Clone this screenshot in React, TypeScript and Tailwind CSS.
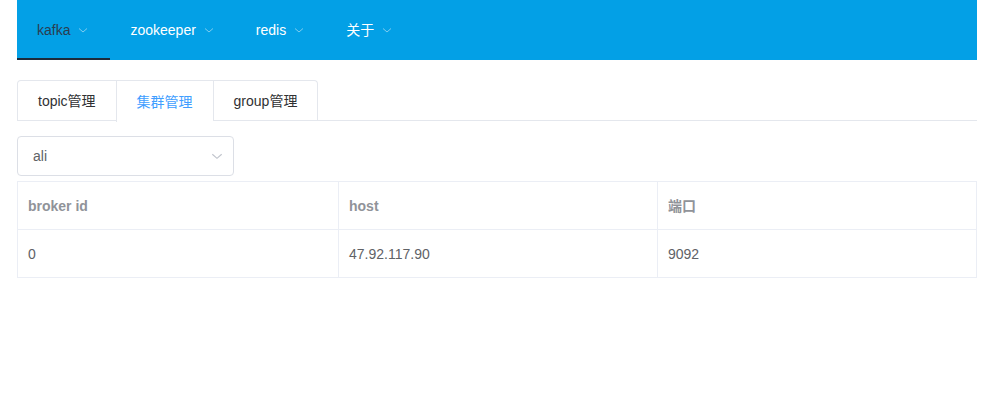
import React, { useState } from "react";

const menus = ["kafka", "zookeeper", "redis", "关于"];
const tabs = ["topic管理", "集群管理", "group管理"];
const rows = [{ id: "0", host: "47.92.117.90", port: "9092" }];

function Arrow({ className }: { className: string }) {
  return (
    <svg viewBox="0 0 12 12" className={className} fill="none">
      <path d="M2 4.5 L6 8 L10 4.5" stroke="currentColor" strokeWidth="1" />
    </svg>
  );
}

export default function App() {
  const [activeMenu, setActiveMenu] = useState(0);
  const [activeTab, setActiveTab] = useState(1);

  return (
    <div
      className="w-[989px] h-[416px] bg-white"
      style={{ fontFamily: '"Liberation Sans", Arial, "Noto Sans CJK SC", sans-serif' }}
    >
      <div className="pl-[17px]">
        {/* Nav */}
        <nav className="flex h-[60px] bg-[#03a0e6] w-[960px]">
          {menus.map((m, i) => (
            <button
              key={m}
              onClick={() => setActiveMenu(i)}
              className={`flex items-center h-[60px] pt-[2px] pl-5 pr-[21px] text-sm ${
                activeMenu === i
                  ? "text-[#2b3d50] border-b-2 border-[#1c2b3a]"
                  : "text-white border-b-2 border-transparent"
              }`}
            >
              {m}
              <Arrow className="w-3 h-3 ml-[7px] text-[#7fcdf0]" />
            </button>
          ))}
        </nav>

        {/* Tabs */}
        <div className="mt-5 w-[960px] flex border-b border-[#e4e7ed] h-[41px]">
          <div className="flex border border-[#e4e7ed] border-b-0 rounded-t">
            {tabs.map((t, i) => (
              <button
                key={t}
                onClick={() => setActiveTab(i)}
                className={`h-10 px-5 text-sm ${i > 0 ? "border-l border-[#e4e7ed]" : ""} ${
                  activeTab === i
                    ? "text-[#409eff] bg-white h-[41px] -mb-px"
                    : "text-[#303133]"
                }`}
              >
                {t}
              </button>
            ))}
          </div>
        </div>

        {/* Select */}
        <div className="mt-[15px] w-[217px] h-10 border border-[#dcdfe6] rounded flex items-center justify-between pl-[15px] pr-[9px]">
          <span className="text-sm text-[#606266]">ali</span>
          <Arrow className="w-[14px] h-[14px] text-[#c0c4cc]" />
        </div>

        {/* Table */}
        <table className="mt-[5px] w-[960px] border-collapse text-sm table-fixed">
          <thead>
            <tr className="h-12">
              <th className="w-[321px] border border-[#ebeef5] text-left font-bold text-[#909399] pl-[10px]">
                broker id
              </th>
              <th className="w-[319px] border border-[#ebeef5] text-left font-bold text-[#909399] pl-[10px]">
                host
              </th>
              <th className="border border-[#ebeef5] text-left font-bold text-[#909399] pl-[10px]">
                端口
              </th>
            </tr>
          </thead>
          <tbody>
            {rows.map((r) => (
              <tr key={r.id} className="h-12">
                <td className="border border-[#ebeef5] text-[#606266] pl-[10px]">{r.id}</td>
                <td className="border border-[#ebeef5] text-[#606266] pl-[10px]">{r.host}</td>
                <td className="border border-[#ebeef5] text-[#606266] pl-[10px]">{r.port}</td>
              </tr>
            ))}
          </tbody>
        </table>
      </div>
    </div>
  );
}
